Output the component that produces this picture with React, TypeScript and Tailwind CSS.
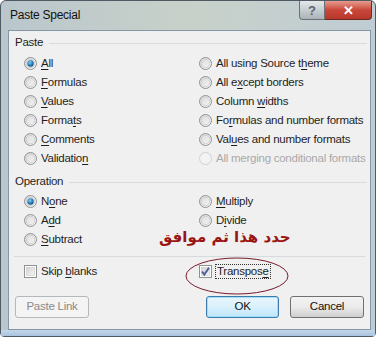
import React from "react";

const font = { fontFamily: '"Liberation Sans", Arial, sans-serif' };

function U({ children }: { children: React.ReactNode }) {
  return <span className="underline underline-offset-2">{children}</span>;
}

function Radio({ checked = false, disabled = false }: { checked?: boolean; disabled?: boolean }) {
  return (
    <svg width="13" height="13" viewBox="0 0 13 13" className="shrink-0">
      <defs>
        <linearGradient id="rg" x1="0" y1="0" x2="1" y2="1">
          <stop offset="0" stopColor="#d8d8d8" />
          <stop offset="1" stopColor="#f8f8f8" />
        </linearGradient>
        <radialGradient id="dot" cx="0.4" cy="0.35" r="0.7">
          <stop offset="0" stopColor="#8ad0f5" />
          <stop offset="0.6" stopColor="#2a7fb8" />
          <stop offset="1" stopColor="#11456f" />
        </radialGradient>
      </defs>
      <circle cx="6.5" cy="6.5" r="6" fill={disabled ? "#f4f4f4" : "url(#rg)"} stroke={disabled ? "#d0d0d0" : "#8f9293"} />
      <circle cx="6.5" cy="6.5" r="4.2" fill="none" stroke={disabled ? "#f0f0f0" : "#c9c9c9"} strokeWidth="0.8" />
      {checked && <circle cx="6.5" cy="6.5" r="3.2" fill="url(#dot)" />}
    </svg>
  );
}

function Check({ checked = false }: { checked?: boolean }) {
  return (
    <svg width="13" height="13" viewBox="0 0 13 13" className="shrink-0">
      <defs>
        <linearGradient id="cg" x1="0" y1="0" x2="1" y2="1">
          <stop offset="0" stopColor="#d2d2d2" />
          <stop offset="1" stopColor="#f6f6f6" />
        </linearGradient>
      </defs>
      <rect x="0.5" y="0.5" width="12" height="12" fill="#fff" stroke="#8f9293" />
      <rect x="2.5" y="2.5" width="8" height="8" fill="url(#cg)" stroke="#c8c8c8" strokeWidth="0.6" />
      {checked && <path d="M3 6.5 L5.3 9.5 L10 2.8" fill="none" stroke="#4c5f9b" strokeWidth="2" />}
    </svg>
  );
}

function Opt({ checked, disabled, children }: { checked?: boolean; disabled?: boolean; children: React.ReactNode }) {
  return (
    <div className="flex h-[19px] items-center gap-[4px] whitespace-nowrap">
      <Radio checked={checked} disabled={disabled} />
      <span className={disabled ? "text-[#a9a9a9]" : "text-[#1e1e1e]"}>{children}</span>
    </div>
  );
}

function Group({ label }: { label: string }) {
  return (
    <div className="flex h-[16px] items-center gap-[6px] pl-[6px] pr-[3px]">
      <span className="text-[#1e1e1e]">{label}</span>
      <div className="h-px flex-1 bg-[#d6dbe0]" />
    </div>
  );
}

export default function App() {
  return (
    <div
      className="relative h-[337px] w-[376px] overflow-hidden text-[11.5px] leading-none tracking-[-0.25px]"
      style={font}
    >
      <div className="flex h-[337px] w-[376px] flex-col rounded-t-[6px] rounded-b-[4px] border border-[#505a63] bg-gradient-to-r from-[#b9c6cc] via-[#c8d1c9] to-[#c0ccd4]">
        {/* title bar */}
        <div className="flex h-[29px] items-start justify-between">
          <div className="pl-[9px] pt-[8px] text-[12px] text-[#111]">Paste Special</div>
          <div className="mr-[3px] flex h-[19px] tracking-normal">
            <div className="flex w-[26px] items-center justify-center rounded-bl-[4px] border border-t-0 border-[#6b7279] bg-gradient-to-b from-[#e4e8ea] to-[#aab3b8] text-[13px] font-bold text-[#5b6670]">
              ?
            </div>
            <div className="flex w-[47px] items-center justify-center rounded-br-[4px] border border-l-0 border-t-0 border-[#6b2a22] bg-gradient-to-b from-[#e69b8f] via-[#c9463a] to-[#b8372b] text-[13px] font-bold text-white">
              ✕
            </div>
          </div>
        </div>
        {/* client area */}
        <div className="ml-[7px] mr-[4px] flex h-[300px] flex-col border border-[#8596a6] bg-[#f0f0f0] pt-[4px]">
          <Group label="Paste" />
          <div className="mt-[3px] grid grid-cols-[175px_1fr] pl-[15px]">
            <div className="flex flex-col">
              <Opt checked><U>A</U>ll</Opt>
              <Opt><U>F</U>ormulas</Opt>
              <Opt><U>V</U>alues</Opt>
              <Opt>Forma<U>t</U>s</Opt>
              <Opt><U>C</U>omments</Opt>
              <Opt>Validatio<U>n</U></Opt>
            </div>
            <div className="flex flex-col">
              <Opt>All using Source t<U>h</U>eme</Opt>
              <Opt>All e<U>x</U>cept borders</Opt>
              <Opt>Column <U>w</U>idths</Opt>
              <Opt>Fo<U>r</U>mulas and number formats</Opt>
              <Opt>Val<U>u</U>es and number formats</Opt>
              <Opt disabled>All merging conditional formats</Opt>
            </div>
          </div>
          <div className="mt-[6px]">
            <Group label="Operation" />
          </div>
          <div className="mt-[2px] grid grid-cols-[175px_1fr] pl-[15px]">
            <div className="flex flex-col">
              <Opt checked>N<U>o</U>ne</Opt>
              <Opt>A<U>d</U>d</Opt>
              <Opt><U>S</U>ubtract</Opt>
            </div>
            <div className="flex flex-col">
              <Opt><U>M</U>ultiply</Opt>
              <Opt>D<U>i</U>vide</Opt>
            </div>
          </div>
          <div className="mx-[5px] mt-[7px] h-px bg-[#d6dbe0]" />
          <div className="mt-[5px] grid h-[19px] grid-cols-[175px_1fr] items-center pl-[15px]">
            <div className="flex items-center gap-[4px]">
              <Check />
              <span className="text-[#1e1e1e]">Skip <U>b</U>lanks</span>
            </div>
            <div className="flex items-center gap-[3px]">
              <Check checked />
              <span className="border border-dotted border-[#333] px-[1px] py-[1px] text-[#1e1e1e]">Transpos<U>e</U></span>
            </div>
          </div>
          <div className="mt-[15px] flex items-center pl-[6px] pr-[6px]">
            <div className="flex h-[22px] w-[74px] items-center justify-center rounded-[3px] border border-[#b5b9bc] bg-[#f4f4f4] text-[#8a8a8a]">
              Paste Link
            </div>
            <div className="ml-auto flex h-[22px] w-[73px] items-center justify-center rounded-[3px] border border-[#3d7bad] bg-gradient-to-b from-[#eaf6fd] via-[#d9f0fc] to-[#bee6fd] text-[#111] shadow-[inset_0_0_0_1px_#9fe0f7]">
              OK
            </div>
            <div className="ml-[11px] flex h-[22px] w-[74px] items-center justify-center rounded-[3px] border border-[#707070] bg-gradient-to-b from-[#f2f2f2] via-[#ebebeb] to-[#cfcfcf] text-[#111]">
              Cancel
            </div>
          </div>
        </div>
        <div className="flex-1 bg-gradient-to-b from-[#c3d7ea] to-[#a9c3de]" />
      </div>

      {/* annotation overlay */}
      <div
        dir="rtl"
        className="absolute left-[159px] top-[230px] text-[15px] font-bold tracking-normal text-[#9a1414]"
        style={{ fontFamily: '"DejaVu Sans", "Noto Sans", sans-serif' }}
      >
        حدد هذا ثم موافق
      </div>
      <svg className="pointer-events-none absolute left-[184px] top-[256px]" width="106" height="40">
        <ellipse cx="53" cy="20" rx="51" ry="18" fill="none" stroke="#7a1a2a" strokeWidth="1" />
      </svg>
    </div>
  );
}
